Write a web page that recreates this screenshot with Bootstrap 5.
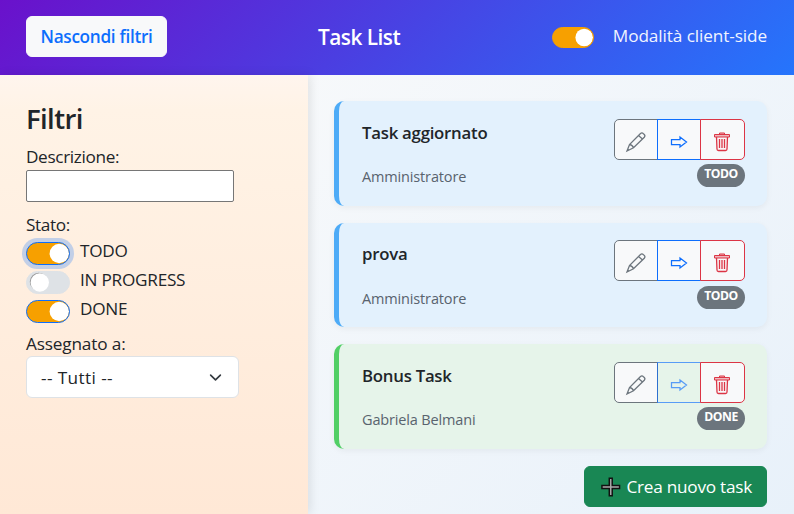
<!DOCTYPE html>
<html lang="it">
<head>
<meta charset="utf-8">
<meta name="viewport" content="width=device-width, initial-scale=1">
<title>Task List</title>
<link href="https://cdn.jsdelivr.net/npm/bootstrap@5.3.0/dist/css/bootstrap.min.css" rel="stylesheet">
<style>
html{font-size:17.3px}
body{font-family:"Open Sans","Noto Sans",sans-serif;font-size:17.2px;letter-spacing:-.35px;line-height:26px;height:514px;overflow:hidden;background:linear-gradient(135deg,#fdfcfb,#e8f1fa)}
.topbar{height:75px;padding:0 27px 2px 26px;background:linear-gradient(135deg,#6a11cb,#2575fc);color:#fff}
.btn{font-size:inherit;letter-spacing:inherit;line-height:26px;border-radius:6px}
.btn-toggle{width:141px;height:41px;padding:6px 0;color:#0d6efd;font-weight:600;letter-spacing:-.3px}
.brand{font-size:20.8px;font-weight:600;letter-spacing:-.5px;margin:2px 0 0 151px}
.mode{gap:19px;color:#f1f4ff;letter-spacing:-.1px}
.mode label{margin-top:-1px}
.form-switch .form-check-input{float:none;margin:0;width:44px;height:23px;border-color:#dee2e6;background-color:#dee2e6;flex:none}
.form-switch .form-check-input,.form-switch .form-check-input:focus{background-image:url("data:image/svg+xml,%3csvg xmlns='http://www.w3.org/2000/svg' viewBox='-4 -4 8 8'%3e%3ccircle cx='-.3' cy='-.3' r='3.4' fill='%23999'/%3e%3ccircle cx='.1' r='3.5' fill='%23fff'/%3e%3c/svg%3e");background-position:2px center}
.form-switch .form-check-input:checked{background-color:#f7a000;border-color:#0d6efd;background-position:right center;background-image:url("data:image/svg+xml,%3csvg xmlns='http://www.w3.org/2000/svg' viewBox='-4 -4 8 8'%3e%3ccircle cx='.3' r='3.7' fill='%23fff'/%3e%3c/svg%3e")}
.form-switch .form-check-input.is-active{box-shadow:0 0 0 4px rgba(13,110,253,.25)}
.form-switch .mode-switch:checked{width:42px;height:21px;margin-top:2px;border-color:#f7a000}
.sidebar{width:308px;height:439px;padding:26px;background:linear-gradient(#fff5ee,#fff3e6 8%,#ffe8d6);box-shadow:2px 0 10px rgba(0,0,0,.1)}
.sidebar h2{font-size:27.5px;font-weight:600;line-height:36px;letter-spacing:-.6px;margin:0 0 7px}
.desc{display:block;width:208px;height:32px;border:1px solid #767676;border-radius:2px;background:#fff}
.state-title{margin-top:10px;margin-bottom:4px}
.option{height:29px;gap:10px}
.option label{margin-top:-4px;letter-spacing:-.25px}
.who-label{margin-top:2px;margin-bottom:-1px;letter-spacing:-.15px}
.sidebar .form-select{width:213px;height:42px;padding:8px 14px 6px;font-size:17.2px;line-height:26px;letter-spacing:.4px;border-color:#dee2e6;border-radius:6px;background-size:17px 13px;background-position:right 14px center}
.content{padding:26px 27px 0 26px}
.task{height:104.5px;margin-bottom:17px;padding:18px 22px 0 23px;border-left:5px solid #4dabf7;border-radius:10px;background:#e3f1fd;box-shadow:0 2px 6px rgba(0,0,0,.05)}
.task h3{font-size:16.8px;font-weight:600;letter-spacing:-.25px;line-height:20px;margin:4px 0 22px}
.task .badge{width:48px;height:23px;margin-top:4px;padding:4px 0;font-size:12.2px;line-height:12px;letter-spacing:-.45px;border-radius:12px}
.task:nth-child(2){padding-top:17.4px}
.task:nth-child(2) .badge{margin-top:5px}
.task:nth-child(2) h3{margin-bottom:22.8px}
.task-done{border-left-color:#51cf66;background:#e6f4ea}
.owner{font-size:14.5px;letter-spacing:-.15px;line-height:24px;color:#59636e}
.task .btn-group{height:41px;width:131px}
.task .btn{padding:0;display:flex;align-items:center;justify-content:center;width:44px;flex:none;background:#f8f9fa;border-radius:5px;--bs-btn-disabled-opacity:.65}
.task .btn:last-child{width:45px;padding-right:1px}
.task .btn:disabled{background:transparent}
.task .btn svg{margin-top:5px}
.btn-create{width:183px;height:41px;padding:1px 14px 0;display:flex;align-items:center;gap:4px;letter-spacing:-.25px}
</style>
<script src="https://cdn.jsdelivr.net/npm/bootstrap@5.3.0/dist/js/bootstrap.bundle.min.js"></script>
</head>
<body>
<svg width="0" height="0" class="d-none">
<symbol id="pencil" viewBox="0 0 22 22"><path d="M2 20L4.500 13.500L15.500 2.500Q17 1.300 18.500 2.700Q20.700 4.300 19.500 6L8.500 16.800ZM4.500 13.500Q7 13.500 8.500 16.800M13.500 4.500L17.500 8M2.500 18L4 19.300" fill="none" stroke="currentColor" stroke-width="1.300"/></symbol>
<symbol id="arrow" viewBox="0 0 18 14"><path d="M1.500 4.500H10V2L16.500 7L10 12V9.500H1.500Z" fill="none" stroke="currentColor" stroke-width="1.250"/></symbol>
<symbol id="trash" viewBox="0 0 18 20"><path d="M6.500 2V1H11.500V2M1.500 2.500H16.500V5H1.500Z" fill="#dc354555" stroke="currentColor"/><path d="M3.500 5L4 17Q4 18.500 5.500 18.500H12.500Q14 18.500 14 17L14.500 5M6.500 7V16M9 7V16M11.500 7V16" fill="none" stroke="currentColor" stroke-width="1.300"/></symbol>
</svg>
<header class="topbar d-flex align-items-center">
<button class="btn btn-light btn-toggle">Nascondi filtri</button>
<h1 class="brand">Task List</h1>
<div class="mode form-switch d-flex align-items-center ms-auto p-0"><input class="form-check-input mode-switch" type="checkbox" role="switch" id="mode" checked><label for="mode">Modalità client-side</label></div>
</header>
<div class="d-flex">
<aside class="sidebar flex-shrink-0">
<h2>Filtri</h2>
<label for="desc" class="d-block">Descrizione:</label>
<input id="desc" class="desc" type="text">
<div class="state-title">Stato:</div>
<div class="form-switch p-0">
<div class="option d-flex"><input class="form-check-input is-active" type="checkbox" id="s1" checked><label for="s1">TODO</label></div>
<div class="option d-flex"><input class="form-check-input" type="checkbox" id="s2"><label for="s2">IN PROGRESS</label></div>
<div class="option d-flex"><input class="form-check-input" type="checkbox" id="s3" checked><label for="s3">DONE</label></div>
</div>
<label for="who" class="d-block who-label">Assegnato a:</label>
<select id="who" class="form-select"><option>-- Tutti --</option></select>
</aside>
<main class="content flex-grow-1">
<article class="task d-flex justify-content-between">
<div><h3>Task aggiornato</h3><div class="owner">Amministratore</div></div>
<div class="d-flex flex-column align-items-end"><div class="btn-group"><button class="btn btn-outline-secondary" aria-label="Modifica"><svg width="22" height="22"><use href="#pencil"/></svg></button><button class="btn btn-outline-primary" aria-label="Avanza"><svg width="18" height="14"><use href="#arrow"/></svg></button><button class="btn btn-outline-danger" aria-label="Elimina"><svg width="18" height="20"><use href="#trash"/></svg></button></div><span class="badge text-bg-secondary">TODO</span></div>
</article>
<article class="task d-flex justify-content-between">
<div><h3>prova</h3><div class="owner">Amministratore</div></div>
<div class="d-flex flex-column align-items-end"><div class="btn-group"><button class="btn btn-outline-secondary" aria-label="Modifica"><svg width="22" height="22"><use href="#pencil"/></svg></button><button class="btn btn-outline-primary" aria-label="Avanza"><svg width="18" height="14"><use href="#arrow"/></svg></button><button class="btn btn-outline-danger" aria-label="Elimina"><svg width="18" height="20"><use href="#trash"/></svg></button></div><span class="badge text-bg-secondary">TODO</span></div>
</article>
<article class="task task-done d-flex justify-content-between">
<div><h3>Bonus Task</h3><div class="owner">Gabriela Belmani</div></div>
<div class="d-flex flex-column align-items-end"><div class="btn-group"><button class="btn btn-outline-secondary" aria-label="Modifica"><svg width="22" height="22"><use href="#pencil"/></svg></button><button class="btn btn-outline-primary" aria-label="Avanza" disabled><svg width="18" height="14"><use href="#arrow"/></svg></button><button class="btn btn-outline-danger" aria-label="Elimina"><svg width="18" height="20"><use href="#trash"/></svg></button></div><span class="badge text-bg-secondary">DONE</span></div>
</article>
<button class="btn btn-success btn-create ms-auto"><svg width="24" height="22" viewBox="0 0 24 22"><path d="M10.500 2H13.500V9.500H21V12.500H13.500V20H10.500V12.500H3V9.500H10.500Z" fill="#aaa" stroke="#111" stroke-width="1.500"/></svg><span class="text-nowrap">Crea nuovo task</span></button>
</main>
</div>
</body>
</html>
